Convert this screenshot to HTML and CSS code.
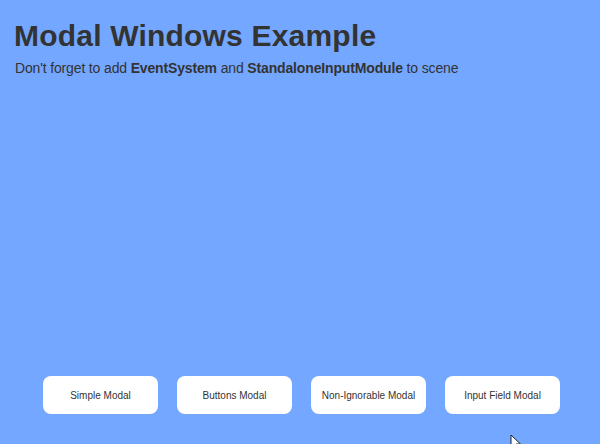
FILE: index.html
```html
<!DOCTYPE html>
<html>
<head>
<meta charset="utf-8">
<link rel="stylesheet" href="styles.css">
</head>
<body>
<div class="page">
  <header class="header">
    <h1 class="title">Modal Windows Example</h1>
    <p class="subtitle">Don't forget to add <b>EventSystem</b> and <b>StandaloneInputModule</b> to scene</p>
  </header>
  <div class="buttons">
    <button class="btn">Simple Modal</button>
    <button class="btn">Buttons Modal</button>
    <button class="btn">Non-Ignorable Modal</button>
    <button class="btn">Input Field Modal</button>
  </div>
  <svg class="cursor" width="12" height="16" viewBox="0 0 12 16"><path d="M1 1 L1 14 L4 11 L6.5 16 L8.5 15 L6 10 L10.5 10 Z" fill="#fff" stroke="#222" stroke-width="1"/></svg>
</div>
</body>
</html>
```
FILE: styles.css
```css
html, body {
  margin: 0;
  padding: 0;
}
body {
  background: #74a7ff;
  font-family: "Liberation Sans", Arial, sans-serif;
  color: #333;
}
.page {
  position: relative;
  width: 600px;
  height: 444px;
  display: flex;
  flex-direction: column;
  overflow: hidden;
}
.header {
  padding: 18px 0 0 14px;
  flex: 1;
}
.title {
  margin: 0;
  font-size: 30px;
  letter-spacing: 0.2px;
  line-height: 36px;
  font-weight: bold;
  color: #333;
}
.subtitle {
  margin: 5px 0 0 1px;
  font-size: 14px;
  letter-spacing: -0.15px;
  line-height: 18px;
  color: #333;
}
.subtitle b {
  font-weight: bold;
}
.buttons {
  display: flex;
  gap: 19px;
  padding: 0 0 30px 43px;
}
.btn {
  width: 115px;
  height: 38px;
  background: #fff;
  border: none;
  border-radius: 8px;
  font-family: "Liberation Sans", Arial, sans-serif;
  font-size: 10px;
  color: #333;
  padding: 0;
}
.cursor {
  position: absolute;
  left: 510px;
  top: 434px;
}
```
